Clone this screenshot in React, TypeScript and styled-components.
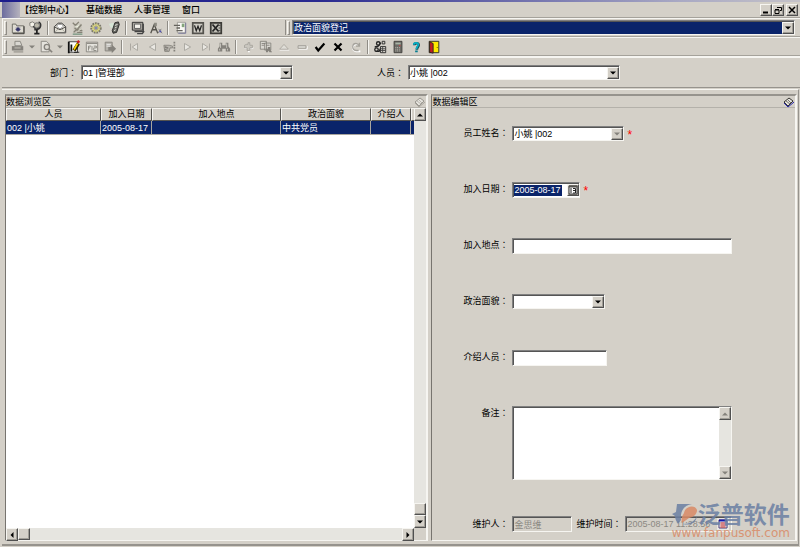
import React from "react";
import styled, { createGlobalStyle, css } from "styled-components";

const face = "#d4d0c8";
const navy = "#0a246a";
const shade = "#808080";
const light = "#f6f5f1";
const track = "#e6e5e0";

const GlobalStyle = createGlobalStyle`
  * { box-sizing: border-box; }
  body { margin: 0; background: ${face}; }
  body, button, input, select, textarea {
    font-family: "Liberation Sans", "Noto Sans CJK SC", sans-serif;
    font-size: 9px;
    line-height: 12px;
    color: #000;
  }
`;

const raised = css`
  background: ${face};
  border: 1px solid;
  border-color: ${light} #505050 #505050 ${light};
  box-shadow: inset -1px -1px 0 #a09d96;
`;

const sunken = css`
  border: 1px solid;
  border-color: ${shade} ${light} ${light} ${shade};
  box-shadow: inset 1px 1px 0 #555;
`;

const Window = styled.div`
  display: flex;
  flex-direction: column;
  min-height: 100vh;
  background: ${face};
`;

const TitleStrip = styled.div`
  height: 2px;
  background: linear-gradient(90deg, #1c1c8c, #2a2a90 40%, #a9a9c4 85%, #c4c2c8);
`;

const MenuBar = styled.nav`
  display: flex;
  align-items: center;
  height: 16px;
  padding-right: 2px;
  border-bottom: 1px solid #a5a29b;
`;

const SystemMenu = styled.div`
  width: 18px;
  height: 16px;
  margin-left: 2px;
  background: linear-gradient(90deg, #6c6c9e, #b5b2bd);
`;

const MenuItem = styled.button`
  padding: 0 6px;
  border: 0;
  background: none;
  font-weight: 500;
  &:first-of-type { padding-left: 0; }
`;

const WindowButtons = styled.div`
  display: flex;
  margin-left: auto;
`;

const WindowButton = styled.button<{ $apart?: boolean }>`
  ${raised}
  display: grid;
  place-items: center;
  width: 12px;
  height: 12px;
  padding: 0;
  margin-left: ${(p) => (p.$apart ? 2 : 0)}px;
`;

const ToolRow = styled.div`
  display: flex;
  align-items: center;
  height: 19px;
  margin-left: 2px;
  border-top: 1px solid ${light};
  border-left: 1px solid ${light};
  border-bottom: 1px solid #a5a29b;
`;

const ToolGroup = styled.div`
  display: flex;
  align-items: center;
`;

const Grip = styled.span`
  width: 3px;
  height: 14px;
  margin: 0 2px 0 1px;
  border: 1px solid;
  border-color: ${light} #8f8c86 #8f8c86 ${light};
`;

const ToolButton = styled.button`
  display: grid;
  place-items: center;
  width: 18px;
  height: 16px;
  padding: 0;
  border: 0;
  background: none;
`;

const MoreButton = styled(ToolButton)`
  width: 10px;
`;

const Divider = styled.span`
  width: 2px;
  height: 14px;
  margin: 0 2px;
  border-left: 1px solid #8f8c86;
  border-right: 1px solid ${light};
`;

const ModuleBar = styled.div`
  display: flex;
  flex: 1;
  align-items: center;
  margin-left: 60px;
  padding-right: 5px;
  border-left: 1px solid #8f8c86;
`;

const FilterBar = styled.div`
  display: grid;
  grid-template-columns: 75px minmax(0, 212fr) 107px minmax(0, 212fr) minmax(0, 176fr);
  align-items: center;
  column-gap: 4px;
  height: 32px;
  margin-left: 2px;
  border-top: 2px solid ${light};
  border-bottom: 1px solid #96938d;
`;

const Caption = styled.label`
  text-align: right;
  white-space: nowrap;
`;

const Colon = styled.span`
  font-family: "Noto Sans CJK TC", sans-serif;
  line-height: 1;
`;

const ComboBox = styled.span<{ $dark?: boolean }>`
  ${sunken}
  display: grid;
  align-items: stretch;
  width: 100%;
  height: 15px;
  background: ${(p) => (p.$dark ? navy : "#fff")};
  & > * { grid-area: 1 / 1; }
`;

const ComboSelect = styled.select<{ $dark?: boolean }>`
  appearance: none;
  width: 100%;
  padding: 0 14px 0 1px;
  border: 0;
  outline: 0;
  background: transparent;
  color: ${(p) => (p.$dark ? "#fff" : "#000")};
  opacity: 1;
  option { color: #000; }
`;

const ComboArrow = styled.span`
  ${raised}
  display: grid;
  place-items: center;
  justify-self: end;
  width: 12px;
  margin-top: 1px;
  pointer-events: none;
`;

const Workspace = styled.main`
  display: grid;
  grid-template-columns: minmax(0, 424fr) minmax(0, 366fr);
  column-gap: 3px;
  flex: 1;
  margin: 1px 1px 1px 2px;
  padding: 4px 1px 3px 3px;
  border-top: 1px solid ${light};
  border-right: 1px solid #96938d;
  border-bottom: 2px solid #96938d;
`;

const Panel = styled.section`
  display: flex;
  flex-direction: column;
  min-width: 0;
  border: solid;
  border-width: 2px 2px 1px 1px;
  border-color: #96938d ${light} ${light} #77746f;
`;

const PanelHeader = styled.header`
  display: flex;
  align-items: center;
  justify-content: space-between;
  height: 12px;
  border-bottom: 1px solid #b4b1aa;
`;

const PanelTitle = styled.h2`
  margin: 0;
  font-size: 9px;
  font-weight: 400;
  line-height: 12px;
`;

const PinButton = styled.button`
  display: grid;
  place-items: center;
  width: 12px;
  height: 12px;
  padding: 0;
  border: 0;
  background: none;
`;

const Browser = styled.div`
  display: grid;
  grid-template-columns: minmax(0, 1fr) 12px;
  grid-template-rows: minmax(0, 1fr) 12px;
  flex: 1;
`;

const TableView = styled.div`
  overflow: hidden;
  background: #fff;
`;

const RecordTable = styled.table`
  width: 100%;
  min-width: 470px;
  table-layout: fixed;
  border-collapse: separate;
  border-spacing: 0;
`;

const Column = styled.col<{ $width?: number }>`
  width: ${(p) => (p.$width ? `${p.$width}px` : "auto")};
`;

const HeadCell = styled.th`
  height: 13px;
  padding: 0;
  border: 1px solid;
  border-color: ${light} #55534f #55534f ${light};
  background: ${face};
  font-weight: 400;
  line-height: 11px;
  white-space: nowrap;
`;

const Cell = styled.td`
  height: 14px;
  padding: 0 1px;
  overflow: hidden;
  border-right: 1px solid #a9a69f;
  border-bottom: 1px solid #a9a69f;
  background: ${navy};
  color: #fff;
  white-space: nowrap;
`;

const ScrollBar = styled.div<{ $vertical?: boolean }>`
  display: flex;
  flex-direction: ${(p) => (p.$vertical ? "column" : "row")};
  background: ${track};
`;

const ScrollButton = styled.button`
  ${raised}
  display: grid;
  place-items: center;
  flex: none;
  width: 12px;
  height: 13px;
  padding: 0;
`;

const ScrollThumb = styled.span<{ $end?: boolean }>`
  ${raised}
  flex: none;
  width: 12px;
  height: 12px;
  margin-top: ${(p) => (p.$end ? "auto" : "0")};
`;

const Spacer = styled.span`
  flex: 1;
`;

const EditForm = styled.form`
  display: flex;
  flex-direction: column;
  padding: 18px 63px 0 0;
`;

const FormRow = styled.div<{ $tall?: boolean }>`
  display: grid;
  grid-template-columns: 76px minmax(0, 1fr);
  column-gap: 4px;
  align-items: start;
  min-height: ${(p) => (p.$tall ? 110 : 56)}px;
`;

const FormCaption = styled(Caption)`
  padding-top: 1px;
`;

const FieldLine = styled.div`
  display: flex;
  align-items: center;
`;

const FieldWidth = styled.div<{ $share: number }>`
  width: ${(p) => p.$share}%;
`;

const Required = styled.span`
  margin-left: 3px;
  color: #f00;
  font-size: 12px;
  line-height: 12px;
  height: 10px;
`;

const TextField = styled.input`
  ${sunken}
  display: block;
  width: 100%;
  height: 16px;
  padding: 0 1px;
  border-radius: 0;
  outline: 0;
  background: #fff;
  &:disabled {
    background: ${face};
    color: #8b8882;
  }
`;

const DateBox = styled.div`
  ${sunken}
  display: flex;
  align-items: center;
  justify-content: space-between;
  width: 68px;
  height: 16px;
  padding-left: 1px;
  background: #fff;
`;

const DateInput = styled.input`
  width: 48px;
  height: 11px;
  padding: 0;
  border: 0;
  outline: 0;
  background: ${navy};
  color: #fff;
`;

const DateButton = styled.button`
  ${raised}
  display: grid;
  place-items: center;
  width: 12px;
  height: 12px;
  padding: 0;
`;

const NoteBox = styled.div`
  ${sunken}
  display: flex;
  height: 74px;
  background: #fff;
`;

const NoteArea = styled.textarea`
  flex: 1;
  min-width: 0;
  padding: 2px;
  border: 0;
  outline: 0;
  resize: none;
  overflow: hidden;
  background: transparent;
`;

const Footer = styled.div`
  position: relative;
  display: grid;
  grid-template-columns: 76px 60px 45px minmax(0, 110px);
  column-gap: 4px;
  align-items: center;
`;

const StampBox = styled.div`
  ${sunken}
  display: flex;
  align-items: center;
  height: 16px;
`;

const StampInput = styled.input`
  flex: 1;
  min-width: 0;
  padding: 0 1px;
  border: 0;
  background: transparent;
  color: #8b8882;
`;

const StampButton = styled.button`
  display: grid;
  place-items: center;
  width: 12px;
  height: 12px;
  padding: 0;
  margin-right: 2px;
  border: 0;
  background: #e9e7e3;
`;

const Watermark = styled.div`
  position: absolute;
  right: -58px;
  bottom: -7px;
  display: grid;
  grid-template-columns: 26px auto;
  opacity: 0.85;
  pointer-events: none;
`;

const BrandName = styled.span`
  color: #6b7fa3;
  font-size: 23px;
  font-weight: 700;
  line-height: 24px;
  white-space: nowrap;
`;

const BrandSite = styled.span`
  grid-column: 1 / -1;
  color: #d98a66;
  font-family: "DejaVu Sans", sans-serif;
  font-size: 12px;
  line-height: 12px;
  white-space: nowrap;
`;

type Direction = "up" | "down" | "left" | "right";

const arrows: Record<Direction, string> = {
  up: "M1 5.5h6L4 2.5z",
  down: "M1 2.5h6L4 5.5z",
  left: "M5.5 1v6l-3-3z",
  right: "M2.5 1v6l3-3z",
};

function Arrow({ to, muted }: { to: Direction; muted?: boolean }) {
  return (
    <svg width="8" height="8" viewBox="0 0 8 8" aria-hidden="true">
      <path d={arrows[to]} fill={muted ? "#85827c" : "#000"} />
    </svg>
  );
}

const G = "#85827c";

const icons: Record<string, React.ReactNode> = {
  camera: (
    <>
      <path d="M1.500 3.500h4l1 2h8v8h-13z" fill="#dedbd2" stroke="#65645d" />
      <path d="M2 14.500h13V6" fill="none" stroke="#33322e" />
      <path d="M8 6.500v6M5 9.500h6M6 7.500l4 4M10 7.500l-4 4" stroke="#4c4c78" />
      <circle cx="8" cy="9.500" r="2" fill="#34346a" />
    </>
  ),
  globe: (
    <>
      <path d="M1 2l3-1 3 2-1 3-3 1-2-2z" fill="#f5f3ea" stroke="#77756e" />
      <path d="M5 6l3 4 4-4M11 1c4 2 3 8-2 9H6" fill="none" stroke="#333" strokeWidth="1.500" />
      <circle cx="9" cy="5" r="3" fill="#bab7a9" stroke="#666" />
      <path d="M9 10v4M6 14.500h6" stroke="#222" strokeWidth="2" />
    </>
  ),
  mail: (
    <>
      <path d="M1.500 6.500L6 2.500h4l4.500 4v7h-13z" fill="#e2dfd5" stroke="#252525" />
      <path d="M4 6l2-2h4l2 2-4 3z" fill="#fff" stroke="#999" />
      <path d="M2 7l6 3 6-3" fill="none" stroke="#45443f" />
      <path d="M2 13l4-4M14 13l-4-4" stroke="#a5a29a" />
    </>
  ),
  tasks: (
    <>
      <path d="M3 3h9v11H3z" fill="#c4c1b7" />
      <path d="M2 2l3 3 4-4M4 8l3 2 5-6M3 13l3-3 7 1M7 13h6" fill="none" stroke="#858276" strokeWidth="1.500" />
      <path d="M5 6l2 1 2-3M8 12l3-3" fill="none" stroke="#f6fbe8" />
      <path d="M2 15h11" stroke="#4c7a60" />
    </>
  ),
  wheel: (
    <>
      <circle cx="8" cy="8" r="5.500" fill="#d1ce9c" stroke="#77756a" strokeWidth="2" strokeDasharray="2 1" />
      <path d="M8 3v10M3 8h10M4.500 4.500l7 7M11.500 4.500l-7 7" stroke="#c4be4e" />
      <circle cx="8" cy="8" r="2" fill="#8789ae" />
    </>
  ),
  phone: (
    <>
      <path d="M2 3l5-1 3 5-2 2-4-2z" fill="#d7e5d6" />
      <path d="M9 2l4-1 1 3-3 9-4 1-1-3z" fill="#686862" stroke="#222" />
      <path d="M9 5l3-1M9 8l2-1M8 11l2-1" stroke="#f4f4ef" />
    </>
  ),
  monitor: (
    <>
      <path d="M1.500 1.500h12v9h-12z" fill="#aaa79f" stroke="#252525" />
      <path d="M4 3.500h7v5H4z" fill="#f3f1ea" stroke="#555" />
      <path d="M4 12h10V3M7 14.500h6l2-3" fill="none" stroke="#444" strokeWidth="1.500" />
    </>
  ),
  plotter: (
    <>
      <path d="M2 14L6 4l4 10M4 10h4" fill="none" stroke="#55534c" strokeWidth="1.500" />
      <path d="M6 2h3v4H6z" fill="#8e8c83" />
      <path d="M11 9l4 5M14 9l-4 5" stroke="#777" />
      <path d="M12 11h2v2h-2z" fill="#5050b0" />
    </>
  ),
  report: (
    <>
      <path d="M5 1.500h9v12H5z" fill="#f8f7f3" stroke="#9d9a93" />
      <path d="M1 5h7M4 8h4M4 11h7" stroke="#66645e" strokeWidth="1.500" />
      <path d="M10 3h3v4h-3z" fill="#83a47c" />
      <path d="M14.500 2v12H6" fill="none" stroke="#717197" />
    </>
  ),
  word: (
    <>
      <path d="M2 2h12v12H2z" fill="#cfccc4" stroke="#55534e" strokeWidth="2" />
      <path d="M4 5l2 6 2-5 2 5 2-6" fill="none" stroke="#222" strokeWidth="1.500" />
    </>
  ),
  excel: (
    <>
      <path d="M2 2h12v12H2z" fill="#c1bfb6" stroke="#3c3b37" strokeWidth="2" />
      <path d="M4 4l7 8M11 4l-7 8" stroke="#222" strokeWidth="2" />
      <path d="M11 5h2M11 8h2M11 11h2" stroke="#444" />
    </>
  ),
  print: (
    <>
      <path d="M4.500 1.500h6l2 5h-8z" fill="#d9d7d1" stroke={G} />
      <path d="M1 7h13v5H1z" fill={G} />
      <path d="M3 13.500h11M4 9h7" stroke="#aaa79f" strokeWidth="2" />
    </>
  ),
  preview: (
    <>
      <path d="M2.500 1.500h6l3 3v9h-9z" fill="#e4e2dc" stroke={G} />
      <circle cx="9" cy="8" r="3" fill="#dcd9d2" stroke={G} strokeWidth="1.500" />
      <path d="M11 10l4 4" stroke={G} strokeWidth="2" />
    </>
  ),
  edit: (
    <>
      <path d="M2 2h10v12H2z" fill="#fff" stroke="#333" />
      <path d="M2 2v13M5 5v8" stroke="#111" strokeWidth="2" />
      <path d="M8 12L13 4" stroke="#302600" strokeWidth="4" />
      <path d="M8 11l4-7" stroke="#ffd400" strokeWidth="2" />
      <path d="M12 3l2-2" stroke="#d12121" strokeWidth="3" />
      <path d="M8 14h6" stroke="#111" />
    </>
  ),
  form: (
    <>
      <path d="M1.500 2.500h13v11h-13z" fill="#e5e3dd" stroke={G} />
      <path d="M2 4h12M4 7v5M4 7h3M4 9h2M8 7v5M10 7h3v2h-3v3h3" fill="none" stroke={G} />
    </>
  ),
  export: (
    <>
      <path d="M2.500 2.500h8v10h-8z" fill="#b6b3ac" stroke={G} />
      <path d="M4 5h5M4 7h4" stroke="#eee" />
      <path d="M6 8h4V5l5 5-5 5v-3H6z" fill={G} />
    </>
  ),
  first: <path d="M4 4v8M12 4v8L6 8z" fill="#e9e7e2" stroke="#a5a29b" />,
  previous: <path d="M12 4v8L5 8z" fill="#e9e7e2" stroke="#a5a29b" />,
  hand: (
    <>
      <path d="M1 6h6l4 1v2H8l-1 4H2z" fill="#bab7b0" stroke={G} />
      <path d="M3 7v5M5 8v4M13 2v12" stroke={G} strokeDasharray="2 1" strokeWidth="2" />
    </>
  ),
  next: <path d="M4 4v8l7-4z" fill="#e9e7e2" stroke="#a5a29b" />,
  last: <path d="M12 4v8M4 4v8l6-4z" fill="#e9e7e2" stroke="#a5a29b" />,
  find: (
    <>
      <path d="M3 3h3v3h4V3h3v4l2 3v3h-5v-3H6v3H1v-3l2-3z" fill={G} />
      <path d="M4 4v5M11 4v5M3 10v2M12 10v2" stroke="#ccc9c2" />
    </>
  ),
  add: (
    <>
      <path d="M9 4v10M4 9h10" stroke="#fff" strokeWidth="2" />
      <path d="M6 5h2V3h2v3h3v3h-3v3H7V9H4V6z" fill="#c9c6bf" stroke="#a5a29b" />
    </>
  ),
  copy: (
    <>
      <path d="M1.500 1.500h7v9h-7zM6.500 3.500h7v8h-7z" fill="#d9d7d1" stroke={G} />
      <path d="M3 4h4M3 6h3M8 6h4" stroke={G} />
      <path d="M8 14v-4h2v-2h3v3l2 3h-3l-1-2-1 2z" fill={G} />
    </>
  ),
  up: (
    <>
      <path d="M3 11.500h11" stroke="#fff" />
      <path d="M3 10.500h10L8 5z" fill="#dfddd7" stroke="#aaa79f" />
    </>
  ),
  minus: (
    <>
      <path d="M4 10.500h10V7" fill="none" stroke="#fff" />
      <path d="M3.500 6.500h9v3h-9z" fill="#dcdad4" stroke="#9c9992" />
    </>
  ),
  check: <path d="M3 8l3 4 7-8" fill="none" stroke="#000" strokeWidth="2.500" />,
  cross: <path d="M4 4l8 8M12 4l-8 8" fill="none" stroke="#000" strokeWidth="2.500" />,
  redo: (
    <>
      <path d="M13 13H8c-5-1-5-8 0-8h2" fill="none" stroke="#fff" strokeWidth="2" />
      <path d="M11 12H8c-5-1-5-8 0-8 2 0 3 1 4 3M12 3v4H8" fill="none" stroke="#a5a29b" strokeWidth="1.500" />
    </>
  ),
  flow: (
    <>
      <circle cx="4" cy="11" r="2" fill="none" stroke="#222" strokeWidth="1.500" />
      <circle cx="6" cy="4" r="2" fill="none" stroke="#222" strokeWidth="1.500" />
      <path d="M2 8l4-1 3-4M3 13h4l2-4" fill="none" stroke="#222" strokeWidth="1.500" />
      <path d="M8.500 7.500h6v7h-6zM10.500 1.500h3v3h-3z" fill="#d3d0c8" stroke="#222" />
      <path d="M9 10h5M9 12h5M11 8v6" stroke="#444" />
    </>
  ),
  calculator: (
    <>
      <path d="M3.500 1.500h9v13h-9z" fill="#6c6b66" stroke="#3f3e3a" />
      <path d="M5 3h6v2H5z" fill="#a9b4a6" />
      <path d="M5 8.500h6M5 10.500h6M5 12.500h6" stroke="#c6c3bc" strokeDasharray="1 1" />
      <path d="M9 6h2v1H9z" fill="#d64040" />
    </>
  ),
  help: (
    <>
      <path d="M6 6c0-3 5-3 5 0 0 2-2 2-2 5" fill="none" stroke="#174c59" strokeWidth="3" />
      <path d="M5.500 5.500c0-3 5-3 5 0 0 2-2 2-2 5" fill="none" stroke="#0ab1c6" strokeWidth="2" />
      <path d="M7 12h3v2H7z" fill="#087d91" />
    </>
  ),
  exit: (
    <>
      <path d="M2.500 1.500h11v13h-11z" fill="#ffe900" stroke="#222" />
      <path d="M3 2l4 2v11l-4-1z" fill="#c42020" stroke="#222" />
      <path d="M11 8h2v1h-2z" fill="#8a7a00" />
    </>
  ),
};

function Icon({ name }: { name: string }) {
  return (
    <svg width="14" height="14" viewBox="0 0 16 16" aria-hidden="true">
      {icons[name]}
    </svg>
  );
}

function Pin({ active }: { active?: boolean }) {
  return (
    <svg width="12" height="12" viewBox="0 0 12 12" aria-hidden="true">
      <path d="M1 6l5-4 4 3-5 5z" fill="#e5e3dd" stroke={active ? "#34332f" : "#99968f"} />
      <path d="M3 5l4 3M5 4l3 3" stroke={active ? "#77756f" : "#bab7b0"} />
      <path d="M1 7l4 4 6-5" fill="none" stroke={active ? "#2424a8" : "#aaa79f"} />
    </svg>
  );
}

function Calendar({ colored }: { colored?: boolean }) {
  return (
    <svg width="10" height="10" viewBox="0 0 10 10" aria-hidden="true">
      <path d="M1 1h8v8H1z" fill="#fff" stroke={colored ? "#4b3c77" : "#333"} />
      <path d="M1 1.500h8" stroke={colored ? "#1515a8" : "#55534f"} strokeWidth="2" />
      {colored ? (
        <path d="M2 4h6M2 6h6M2 8h6M4 3v6M6 3v6" stroke="#c85b5b" />
      ) : (
        <path d="M3 3v5M5 3.500h2.500V8H5M5 5.500h2" fill="none" stroke="#222" />
      )}
    </svg>
  );
}

interface ComboProps {
  id: string;
  value: string;
  dark?: boolean;
  muted?: boolean;
  label?: string;
}

function Combo({ id, value, dark, muted, label }: ComboProps) {
  return (
    <ComboBox $dark={dark}>
      <ComboSelect id={id} $dark={dark} aria-label={label} defaultValue={value}>
        <option value={value}>{value}</option>
      </ComboSelect>
      <ComboArrow>
        <Arrow to="down" muted={muted} />
      </ComboArrow>
    </ComboBox>
  );
}

function Tools({ names }: { names: string[] }) {
  return (
    <ToolGroup>
      {names.map((name, i) => {
        if (name === "|") return <Divider key={i} />;
        if (name === "v")
          return (
            <MoreButton key={i} type="button" aria-label="more">
              <Arrow to="down" muted />
            </MoreButton>
          );
        return (
          <ToolButton key={i} type="button" aria-label={name}>
            <Icon name={name} />
          </ToolButton>
        );
      })}
    </ToolGroup>
  );
}

const menus = ["【控制中心】", "基础数据", "人事管理", "窗口"];
const mainTools = ["camera", "globe", "|", "mail", "tasks", "wheel", "phone", "|", "monitor", "plotter", "|", "report", "word", "excel"];
const recordTools = [
  "print", "v", "preview", "v", "edit", "form", "export", "|",
  "first", "previous", "hand", "next", "last", "find", "|",
  "add", "copy", "up", "minus", "check", "cross", "redo", "|",
  "flow", "calculator", "help", "exit",
];
const columns = [
  { title: "人员", width: 95 },
  { title: "加入日期", width: 51 },
  { title: "加入地点", width: 129 },
  { title: "政治面貌", width: 90 },
  { title: "介绍人", width: 40 },
  { title: "" },
];
const record = ["002 |小姚", "2005-08-17", "", "中共党员", "", ""];

export default function App() {
  return (
    <Window>
      <GlobalStyle />
      <TitleStrip />
      <MenuBar>
        <SystemMenu />
        {menus.map((menu) => (
          <MenuItem key={menu} type="button">{menu}</MenuItem>
        ))}
        <WindowButtons>
          <WindowButton type="button" aria-label="minimize">
            <svg width="8" height="8" viewBox="0 0 8 8"><path d="M1 6.500h5" stroke="#000" strokeWidth="2" /></svg>
          </WindowButton>
          <WindowButton type="button" aria-label="restore">
            <svg width="8" height="8" viewBox="0 0 8 8">
              <path d="M3 1.500h4.500v3H6M1 4h4v3.500H1zM1 3.500h4" fill="none" stroke="#000" />
            </svg>
          </WindowButton>
          <WindowButton type="button" aria-label="close" $apart>
            <svg width="8" height="8" viewBox="0 0 8 8">
              <path d="M1 1l6 6M7 1l-6 6" stroke="#000" strokeWidth="1.500" />
            </svg>
          </WindowButton>
        </WindowButtons>
      </MenuBar>
      <ToolRow>
        <Grip />
        <Tools names={mainTools} />
        <ModuleBar>
          <Grip />
          <Combo id="module" value="政治面貌登记" label="module" dark />
        </ModuleBar>
      </ToolRow>
      <ToolRow>
        <Grip />
        <Tools names={recordTools} />
      </ToolRow>
      <FilterBar>
        <Caption htmlFor="department">部门<Colon>：</Colon></Caption>
        <Combo id="department" value="01 |管理部" />
        <Caption htmlFor="person">人员<Colon>：</Colon></Caption>
        <Combo id="person" value="小姚 |002" />
      </FilterBar>
      <Workspace>
        <Panel>
          <PanelHeader>
            <PanelTitle>数据浏览区</PanelTitle>
            <PinButton type="button" aria-label="pin"><Pin /></PinButton>
          </PanelHeader>
          <Browser>
            <TableView>
              <RecordTable>
                <colgroup>
                  {columns.map((c, i) => <Column key={i} $width={c.width} />)}
                </colgroup>
                <thead>
                  <tr>{columns.map((c, i) => <HeadCell key={i}>{c.title}</HeadCell>)}</tr>
                </thead>
                <tbody>
                  <tr>{record.map((text, i) => <Cell key={i}>{text}</Cell>)}</tr>
                </tbody>
              </RecordTable>
            </TableView>
            <ScrollBar $vertical>
              <ScrollButton type="button" aria-label="up"><Arrow to="up" /></ScrollButton>
              <ScrollThumb $end />
              <ScrollButton type="button" aria-label="down"><Arrow to="down" /></ScrollButton>
            </ScrollBar>
            <ScrollBar>
              <ScrollButton type="button" aria-label="left"><Arrow to="left" /></ScrollButton>
              <ScrollThumb />
              <Spacer />
              <ScrollButton type="button" aria-label="right"><Arrow to="right" /></ScrollButton>
            </ScrollBar>
          </Browser>
        </Panel>
        <Panel>
          <PanelHeader>
            <PanelTitle>数据编辑区</PanelTitle>
            <PinButton type="button" aria-label="pin"><Pin active /></PinButton>
          </PanelHeader>
          <EditForm>
            <FormRow>
              <FormCaption htmlFor="name">员工姓名<Colon>：</Colon></FormCaption>
              <FieldLine>
                <FieldWidth $share={51}><Combo id="name" value="小姚 |002" muted /></FieldWidth>
                <Required>*</Required>
              </FieldLine>
            </FormRow>
            <FormRow>
              <FormCaption htmlFor="joined">加入日期<Colon>：</Colon></FormCaption>
              <FieldLine>
                <DateBox>
                  <DateInput id="joined" defaultValue="2005-08-17" />
                  <DateButton type="button" aria-label="calendar"><Calendar /></DateButton>
                </DateBox>
                <Required>*</Required>
              </FieldLine>
            </FormRow>
            <FormRow>
              <FormCaption htmlFor="place">加入地点<Colon>：</Colon></FormCaption>
              <TextField id="place" />
            </FormRow>
            <FormRow>
              <FormCaption htmlFor="status">政治面貌<Colon>：</Colon></FormCaption>
              <FieldWidth $share={42}><Combo id="status" value="" /></FieldWidth>
            </FormRow>
            <FormRow>
              <FormCaption htmlFor="introducer">介绍人员<Colon>：</Colon></FormCaption>
              <FieldWidth $share={43}><TextField id="introducer" /></FieldWidth>
            </FormRow>
            <FormRow $tall>
              <FormCaption htmlFor="note">备注<Colon>：</Colon></FormCaption>
              <NoteBox>
                <NoteArea id="note" />
                <ScrollBar $vertical>
                  <ScrollButton type="button" aria-label="up"><Arrow to="up" muted /></ScrollButton>
                  <Spacer />
                  <ScrollButton type="button" aria-label="down"><Arrow to="down" muted /></ScrollButton>
                </ScrollBar>
              </NoteBox>
            </FormRow>
            <Footer>
              <Caption htmlFor="keeper">维护人<Colon>：</Colon></Caption>
              <TextField id="keeper" defaultValue="金思维" disabled />
              <Caption htmlFor="stamp">维护时间<Colon>：</Colon></Caption>
              <StampBox>
                <StampInput id="stamp" defaultValue="2005-08-17 11:28:58" disabled />
                <StampButton type="button" aria-label="calendar"><Calendar colored /></StampButton>
              </StampBox>
              <Watermark>
                <svg width="26" height="24" viewBox="0 0 26 24" aria-hidden="true">
                  <path d="M5 1h15C12 2 8 8 9 17L6 21C4 18 3 15 3 13L0 11l4-2z" fill="#6b7fa3" />
                  <path d="M12 10c1-7 11-9 13-3 0 4-3 7-8 8l-7 5c-1-4 0-7 2-10z" fill="#d98a66" />
                  <path d="M11 21c7 0 12-3 14-8-1 7-7 10-14 8z" fill="#6b7fa3" />
                </svg>
                <BrandName>泛普软件</BrandName>
                <BrandSite>www.fanpusoft.com</BrandSite>
              </Watermark>
            </Footer>
          </EditForm>
        </Panel>
      </Workspace>
    </Window>
  );
}
